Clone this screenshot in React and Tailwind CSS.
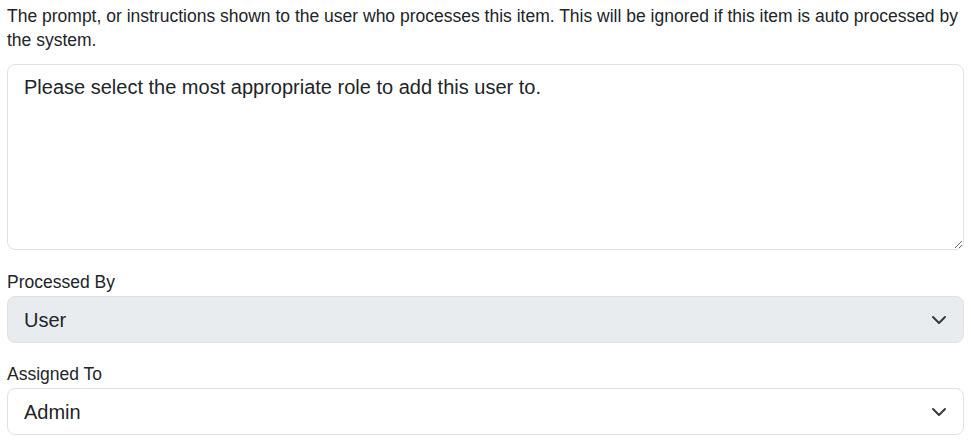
const SelectField = ({ label, value, options, disabled }) => (
  <div>
    <label className="block mt-5 text-[17.5px] leading-6 text-[#212529]">{label}</label>
    <div className="relative mt-[2px]">
      <select
        defaultValue={value}
        disabled={disabled}
        className={`block w-full h-[47px] appearance-none rounded-lg border border-[#dee2e6] pl-4 pr-12 text-xl leading-[30px] text-[#212529] outline-none ${disabled ? 'bg-[#e9ecef]' : 'bg-white'}`}
      >
        {options.map(o => (
          <option key={o} value={o}>{o}</option>
        ))}
      </select>
      <svg
        className="pointer-events-none absolute right-[17px] top-1/2 -translate-y-1/2"
        width="16"
        height="16"
        viewBox="0 0 16 16"
        fill="none"
      >
        <path d="m2 5 6 6 6-6" stroke="#343a40" strokeWidth="2" strokeLinecap="round" strokeLinejoin="round" />
      </svg>
    </div>
  </div>
);

const App = () => {
  return (
    <div className="px-[7px] pt-1 bg-white min-h-screen font-['Liberation_Sans',Arial,sans-serif] text-[#212529]">
      <p className="text-[17.5px] leading-6">
        The prompt, or instructions shown to the user who processes this item. This will be ignored if this item is auto processed by the system.
      </p>
      <textarea
        className="block mt-3 w-full h-[186px] rounded-lg border border-[#dee2e6] bg-white px-4 pt-[7px] pb-2 text-xl leading-[30px] text-[#212529] outline-none"
        defaultValue="Please select the most appropriate role to add this user to."
      />

      <SelectField label="Processed By" value="User" options={['User', 'System']} disabled />
      <div className="-mt-px">
        <SelectField label="Assigned To" value="Admin" options={['Admin', 'Manager', 'Editor']} />
      </div>
    </div>
  );
};

export default App;
